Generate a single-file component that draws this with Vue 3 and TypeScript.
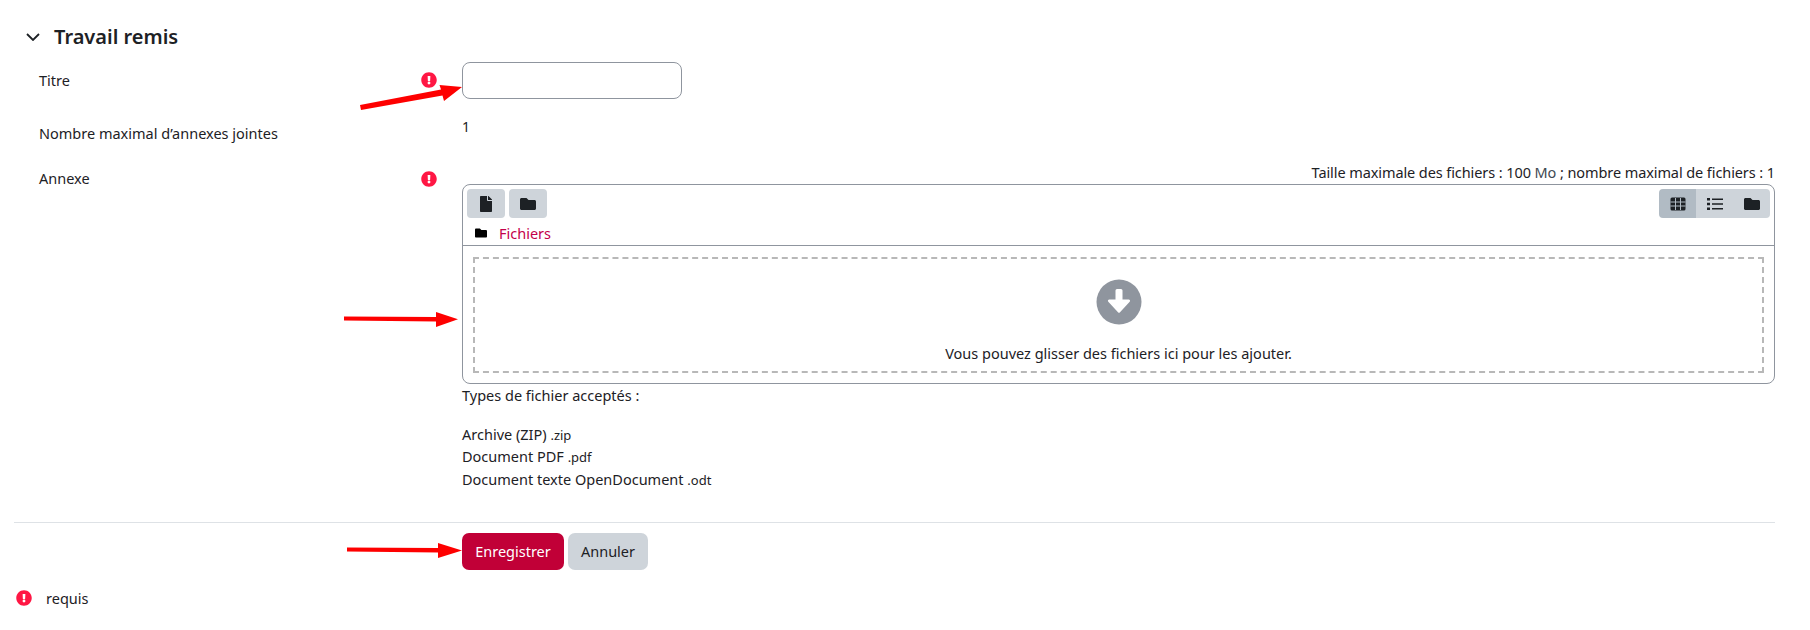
<script setup lang="ts">
const exclam = 'M504 256c0 136.997-111.043 248-248 248S8 392.997 8 256C8 119.083 119.043 8 256 8s248 111.083 248 248zm-248 50c-25.405 0-46 20.595-46 46s20.595 46 46 46 46-20.595 46-46-20.595-46-46-46zm-43.673-165.346l7.418 136c.347 6.364 5.609 11.346 11.982 11.346h48.546c6.373 0 11.635-4.982 11.982-11.346l7.418-136c.375-6.874-5.098-12.654-11.982-12.654h-63.383c-6.884 0-12.356 5.78-11.981 12.654z'
const folder = 'M464 128H272l-64-64H48C21.49 64 0 85.49 0 112v288c0 26.51 21.49 48 48 48h416c26.51 0 48-21.49 48-48V176c0-26.51-21.49-48-48-48z'
const file = 'M224 136V0H24C10.7 0 0 10.7 0 24v464c0 13.3 10.7 24 24 24h336c13.3 0 24-10.7 24-24V160H248c-13.2 0-24-10.8-24-24zm160-14.1v6.1H256V0h6.1c6.4 0 12.5 2.5 17 7l97.9 98c4.5 4.5 7 10.6 7 16.9z'
const types = [
  { name: 'Archive (ZIP)', ext: '.zip' },
  { name: 'Document PDF', ext: '.pdf' },
  { name: 'Document texte OpenDocument', ext: '.odt' },
]
</script>

<template>
  <div class="page">
    <div class="legend">
      <svg class="chevron" viewBox="0 0 14 8"><path d="M1 1l6 6 6-6" fill="none" stroke="#1d2125" stroke-width="1.8" /></svg>
      <h3>Travail remis</h3>
    </div>

    <div class="row first">
      <div class="label"><span>Titre</span><svg class="req" viewBox="0 0 512 512"><path :d="exclam" /></svg></div>
      <div><input class="title-input" type="text" /></div>
    </div>

    <div class="row second">
      <div class="label"><span>Nombre maximal d’annexes jointes</span></div>
      <div class="static">1</div>
    </div>

    <div class="row third">
      <div class="label"><span>Annexe</span><svg class="req" viewBox="0 0 512 512"><path :d="exclam" /></svg></div>
      <div>
        <div class="limits">Taille maximale des fichiers : 100 <span class="unit">Mo</span> ; nombre maximal de fichiers : 1</div>
        <div class="fm">
          <div class="fm-toolbar">
            <div class="fm-actions">
              <button class="tool"><svg class="ic-file" viewBox="0 0 384 512"><path :d="file" /></svg></button>
              <button class="tool"><svg class="ic" viewBox="0 0 512 512"><path :d="folder" /></svg></button>
            </div>
            <div class="fm-views">
              <button class="view active">
                <svg class="ic" viewBox="0 0 16 16">
                  <rect x="0.5" y="1.500" width="15" height="13" rx="1.500" />
                  <path d="M0.5 6h15M0.5 10h15M5.5 2v12M10.5 2v12" stroke="#b1bbc4" stroke-width="1" fill="none" />
                </svg>
              </button>
              <button class="view">
                <svg class="ic" viewBox="0 0 16 16">
                  <path d="M0 2h3v2.400H0zM0 6.800h3v2.400H0zM0 11.600h3V14H0zM5 2.400h11v1.600H5zM5 7.200h11v1.600H5zM5 12h11v1.600H5z" />
                </svg>
              </button>
              <button class="view"><svg class="ic" viewBox="0 0 512 512"><path :d="folder" /></svg></button>
            </div>
          </div>
          <div class="crumb">
            <svg class="crumb-ic" viewBox="0 0 512 512"><path :d="folder" fill="#000" /></svg>
            <a class="crumb-link">Fichiers</a>
          </div>
          <div class="fm-body">
            <div class="drop">
              <svg class="drop-ic" viewBox="0 0 46 46">
                <circle cx="23" cy="23" r="22.500" fill="#8f959e" />
                <path d="M19.500 11.500a1.500 1.500 0 0 1 1.500-1.500h4a1.500 1.500 0 0 1 1.500 1.500v9h6.200c1.200 0 1.800 1.400 1 2.300L24 33.300a1.400 1.400 0 0 1-2 0L12.300 22.800c-.8-.9-.2-2.300 1-2.300h6.200z" fill="#fff" />
              </svg>
              <div class="drop-text">Vous pouvez glisser des fichiers ici pour les ajouter.</div>
            </div>
          </div>
        </div>
        <div class="accepted">Types de fichier acceptés :</div>
        <ul class="types">
          <li v-for="t in types" :key="t.ext">{{ t.name }} <small>{{ t.ext }}</small></li>
        </ul>
      </div>
    </div>

    <div class="actions">
      <button class="btn primary">Enregistrer</button>
      <button class="btn secondary">Annuler</button>
    </div>

    <div class="required">
      <svg class="req" viewBox="0 0 512 512"><path :d="exclam" /></svg>
      <span>requis</span>
    </div>

    <svg class="arrows" width="1810" height="630" viewBox="0 0 1810 630">
      <path d="M360 105L441 89.500L439.500 85L462 87L444 101L442.500 95.500L361 110z" fill="#fe0000" />
      <path d="M344 316.500L436 317V312L458 319.300L436 327V321.500L344 320.500z" fill="#fe0000" />
      <path d="M347 547.500L438 548V543L462 550.500L438 558V552.500L347 551.500z" fill="#fe0000" />
    </svg>
  </div>
</template>

<style>
html, body { margin: 0; background: #fff; }
</style>

<style scoped>
.page {
  position: relative;
  box-sizing: border-box;
  width: 1810px;
  height: 630px;
  overflow: hidden;
  padding: 24px 35px 0 14px;
  font-family: "Noto Sans", "Open Sans", sans-serif;
  font-size: 14.5px;
  line-height: 22.5px;
  color: #1d2125;
}
.legend {
  display: flex;
  align-items: center;
  height: 26px;
  padding-left: 12px;
  gap: 14px;
}
.chevron { width: 14px; height: 8px; }
h3 {
  margin: 0;
  font-size: 20px;
  font-weight: 600;
  line-height: 26px;
}
.row {
  display: grid;
  grid-template-columns: 448px 1fr;
}
.first { margin-top: 12px; }
.second { margin-top: 16px; }
.third { margin-top: 16px; }
.label {
  display: flex;
  justify-content: space-between;
  align-items: flex-start;
  padding: 7px 25px 0 25px;
}
.third .label { padding-top: 6px; }
.req {
  width: 16px;
  height: 16px;
  fill: #ff1744;
  margin-top: 3px;
  flex: none;
}
.third .req { margin-top: 4px; }
.title-input {
  display: block;
  box-sizing: border-box;
  width: 220px;
  height: 37px;
  border: 1px solid #8f959e;
  border-radius: 8px;
  background: #fff;
}
.static { padding-top: 1px; font-size: 14px; }
.limits { text-align: right; letter-spacing: -0.09px; margin-bottom: 1px; }
.unit { color: #3f4a52; }
.fm {
  box-sizing: border-box;
  height: 200px;
  border: 1px solid #8f959e;
  border-radius: 8px;
  display: flex;
  flex-direction: column;
}
.fm-toolbar {
  display: flex;
  justify-content: space-between;
  padding: 4px 4px 0 4px;
}
.fm-actions { display: flex; gap: 4px; }
.tool, .view {
  border: 0;
  padding: 0;
  height: 29px;
  background: #ced4da;
  display: flex;
  align-items: center;
  justify-content: center;
}
.tool { width: 38px; border-radius: 4px; }
.fm-views { display: flex; border-radius: 4px; overflow: hidden; }
.view { width: 37px; }
.view.active { background: #b1bbc4; }
.ic { width: 16px; height: 16px; fill: #1d2125; }
.ic-file { width: 12px; height: 16px; fill: #1d2125; }
.crumb {
  display: flex;
  align-items: center;
  height: 24px;
  padding: 3px 0 0 12px;
  border-bottom: 1px solid #8f959e;
  box-sizing: content-box;
}
.crumb-ic { width: 12px; height: 12px; }
.crumb-link { margin-left: 12px; color: #c4004a; }
.fm-body {
  flex: 1;
  display: flex;
  padding: 11px 10px 10px 10px;
}
.drop {
  flex: 1;
  border: 2px dashed #b8b8b8;
  display: flex;
  flex-direction: column;
  align-items: center;
  box-sizing: border-box;
}
.drop-ic { width: 46px; height: 46px; margin-top: 20px; }
.drop-text { margin-top: 17px; }
.accepted { margin-top: 0; }
.types {
  list-style: none;
  margin: 16px 0 0;
  padding: 0;
}
.types li { height: 22.5px; }
.types small { font-size: 13px; line-height: 1; }
.actions {
  margin-top: 32px;
  padding: 10px 0 0 448px;
  border-top: 1px solid #dee2e6;
  display: flex;
  gap: 4px;
}
.btn {
  height: 37px;
  border: 0;
  border-radius: 7px;
  font: inherit;
  padding: 0;
}
.primary { width: 102px; background: #c10037; color: #fff; }
.secondary { width: 80px; background: #ced4da; color: #1d2125; }
.required {
  display: flex;
  align-items: center;
  margin-top: 17px;
  padding-left: 2px;
  gap: 14px;
}
.required .req { margin-top: 0; }
.arrows {
  position: absolute;
  left: 0;
  top: 0;
  pointer-events: none;
}
</style>
